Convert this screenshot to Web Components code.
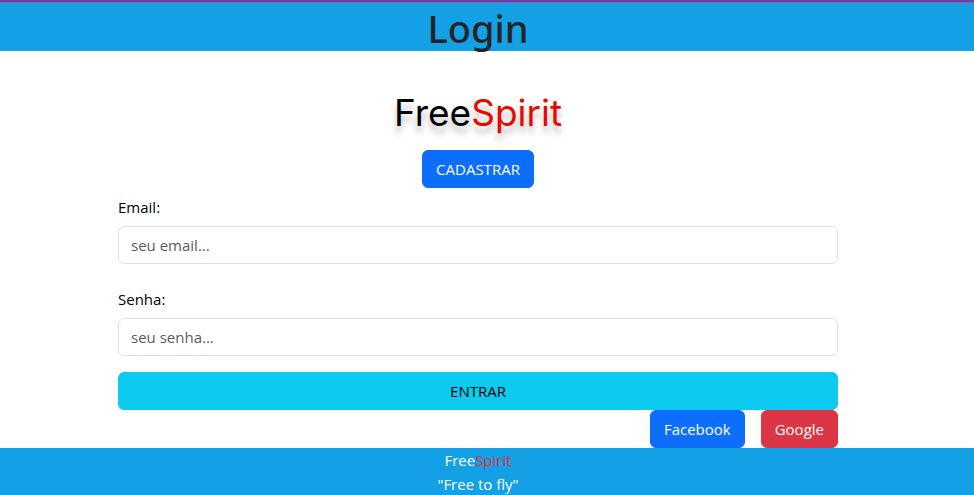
<!DOCTYPE html>
<html lang="pt-BR">
<head>
<meta charset="utf-8">
<meta name="viewport" content="width=device-width, initial-scale=1">
<title>Login</title>
<style>
body{margin:0;font:15px/24px "Open Sans","Noto Sans",sans-serif;color:#212529;background:#fff}
</style>
</head>
<body>
<login-page></login-page>
<script>
const define = (name, html, setup) => customElements.define(name, class extends HTMLElement {
  constructor() {
    super();
    this.attachShadow({mode: "open"}).innerHTML = html;
  }
  connectedCallback() { if (setup) setup(this, this.shadowRoot); }
});

define("page-header", `<style>
:host{display:block;background:#14a0e4;border-top:2px solid #6a42a5;text-align:center}
h1{margin:0;border-top:1px solid #8a63b4;padding:2px 18px 0 0;font:500 38px/46px "Noto Sans","Open Sans",sans-serif;color:#212529}
</style><h1><slot></slot></h1>`);

define("brand-logo", `<style>
:host{display:block;font:37px/42px Inter,sans-serif;color:#000;text-align:center;text-shadow:0 7px 6px rgba(0,0,0,.25)}
span{color:#e60a00}
</style>Free<span>Spirit</span>`);

define("app-button", `<style>
:host{display:block}
button{display:block;box-sizing:border-box;width:100%;height:38px;padding:0 13px;border:1px solid var(--tone,#0d6efd);border-radius:6px;background:var(--tone,#0d6efd);color:var(--ink,#fff);font:inherit;cursor:pointer}
</style><button type="button"><slot></slot></button>`);

define("form-field", `<style>
:host{display:block}
label{display:block;margin-bottom:7px;color:#000}
input{display:block;box-sizing:border-box;width:100%;height:38px;padding:6px 12px;border:1px solid #dee2e6;border-radius:6px;background:#fff;color:#212529;font:inherit}
input::placeholder{color:#595c5f;opacity:1}
</style><label for="field"></label><input id="field">`, (host, root) => {
  root.querySelector("label").textContent = host.getAttribute("label");
  const input = root.querySelector("input");
  input.type = host.getAttribute("type") || "text";
  input.placeholder = host.getAttribute("placeholder");
});

define("page-footer", `<style>
:host{display:block;background:#14a0e4;color:#fff;text-align:center;padding-right:18px}
p{margin:0}
span{color:#dc3545}
</style><p>Free<span>Spirit</span></p><p>"Free to fly"</p>`);

define("login-page", `<style>
:host{display:flex;flex-direction:column;min-height:100vh}
main{padding:41px 18px 0 0}
.content{box-sizing:border-box;max-width:744px;margin:0 auto;padding:0 12px}
.register{display:flex;justify-content:center;margin:16px 0 7px}
form-field{margin-bottom:23px}
form-field.last{margin-bottom:16px}
.enter{--tone:#0dcaf0;--ink:#000}
.social{display:flex;justify-content:flex-end;gap:16px}
.google{--tone:#dc3545}
page-footer{flex:1 0 auto}
</style>
<page-header>Login</page-header>
<main><div class="content">
<brand-logo></brand-logo>
<div class="register"><app-button>CADASTRAR</app-button></div>
<form-field label="Email:" type="email" placeholder="seu email..."></form-field>
<form-field class="last" label="Senha:" type="password" placeholder="seu senha..."></form-field>
<app-button class="enter">ENTRAR</app-button>
<div class="social"><app-button>Facebook</app-button><app-button class="google">Google</app-button></div>
</div></main>
<page-footer></page-footer>`);
</script>
</body>
</html>
